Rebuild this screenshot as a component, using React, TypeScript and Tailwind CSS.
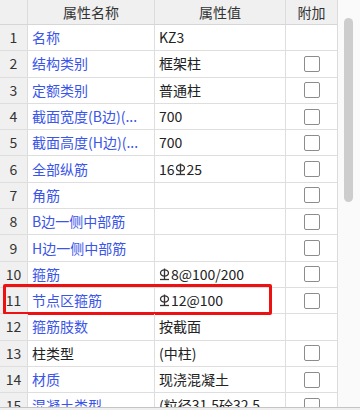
import React from "react";

const Rebar = () => (
  <svg width="11" height="13" viewBox="0 0 11 13" className="inline-block align-[-1px] mr-[1px]">
    <ellipse cx="5.5" cy="5" rx="4" ry="3.2" fill="none" stroke="#333" strokeWidth="1.3" />
    <line x1="5.5" y1="0.5" x2="5.5" y2="11.5" stroke="#333" strokeWidth="1.3" />
    <line x1="1" y1="11.5" x2="10" y2="11.5" stroke="#333" strokeWidth="1.3" />
  </svg>
);

type Row = { name: string; value: React.ReactNode; check: boolean; black?: boolean };

const rows: Row[] = [
  { name: "名称", value: "KZ3", check: false },
  { name: "结构类别", value: "框架柱", check: true },
  { name: "定额类别", value: "普通柱", check: true },
  { name: "截面宽度(B边)(...", value: "700", check: true },
  { name: "截面高度(H边)(...", value: "700", check: true },
  { name: "全部纵筋", value: (<>16<Rebar />25</>), check: true },
  { name: "角筋", value: "", check: true },
  { name: "B边一侧中部筋", value: "", check: true },
  { name: "H边一侧中部筋", value: "", check: true },
  { name: "箍筋", value: (<><Rebar />8@100/200</>), check: true },
  { name: "节点区箍筋", value: (<><Rebar />12@100</>), check: true },
  { name: "箍筋肢数", value: "按截面", check: false },
  { name: "柱类型", value: "(中柱)", check: true, black: true },
  { name: "材质", value: "现浇混凝土", check: true },
  { name: "混凝土类型", value: "(粒径31.5砼32.5", check: true },
];

export default function App() {
  return (
    <div
      className="w-[360px] h-[410px] bg-white flex flex-col overflow-hidden text-[14px] text-[#333]"
      style={{ fontFamily: '"Noto Sans CJK SC", "Noto Sans", sans-serif' }}
    >
      <div className="flex h-[407px]">
        <div className="w-[338px] h-full overflow-hidden border-r border-[#dcdcdc]">
          <div className="grid grid-cols-[28px_127px_131px_51px] h-[25px] bg-[#f0f0f0] border-b border-[#d6d6d6]">
            <div className="border-r border-[#dcdcdc]" />
            <div className="border-r border-[#dcdcdc] flex items-center justify-center">属性名称</div>
            <div className="border-r border-[#dcdcdc] flex items-center justify-center">属性值</div>
            <div className="flex items-center justify-center">附加</div>
          </div>
          {rows.map((r, i) => (
            <div key={i} className="relative grid grid-cols-[28px_127px_131px_51px] h-[26.3px] border-b border-[#dedede]">
              <div className="bg-[#f0f0f0] border-r border-[#dcdcdc] flex items-center justify-center">{i + 1}</div>
              <div className={`border-r border-[#dedede] flex items-center pl-[4px] whitespace-nowrap overflow-hidden ${r.black ? "text-[#222]" : "text-[#3a55e8]"}`}>
                {r.name}
              </div>
              <div className="border-r border-[#dedede] flex items-center pl-[4px] whitespace-nowrap overflow-hidden text-[#222]">
                {r.value}
              </div>
              <div className="flex items-center justify-center">
                {r.check && (
                  <div className="w-[16px] h-[16px] rounded-[2px] border-[1.5px] border-[#8c8c8c] bg-white" />
                )}
              </div>
              {i === 10 && (
                <div className="absolute left-[3px] top-[-4px] w-[269px] h-[31px] border-[3px] border-[#ee1111] rounded-[2px] pointer-events-none" />
              )}
            </div>
          ))}
        </div>
        <div className="w-[22px] h-full bg-[#fafafa] pl-[6px] pt-[18px]">
          <div className="w-[9px] h-[184px] rounded-full bg-[#cdcdcd]" />
        </div>
      </div>
      <div className="h-[3px] border-t border-[#c4c4c4] bg-[#f0f0f0]" />
    </div>
  );
}
